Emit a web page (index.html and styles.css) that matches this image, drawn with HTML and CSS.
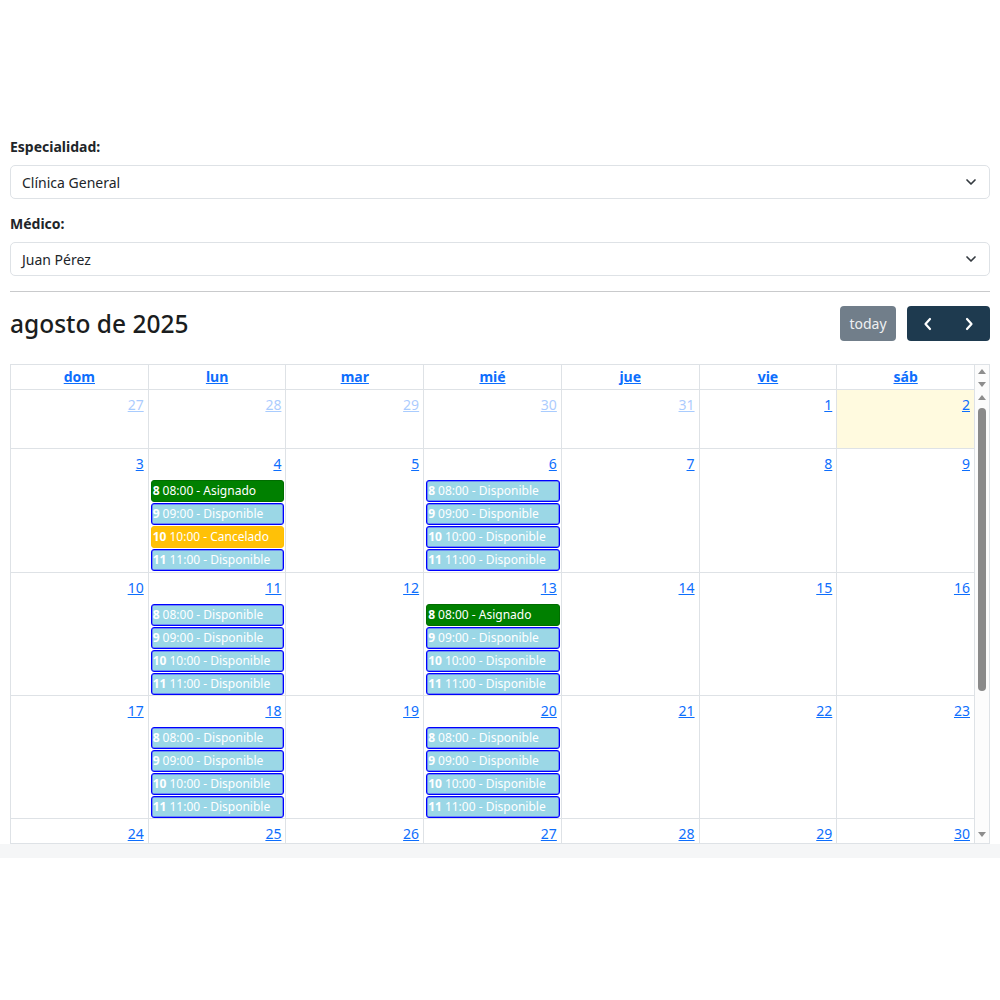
FILE: index.html
```html
<!DOCTYPE html>
<html lang="es">
<head>
<meta charset="utf-8">
<title>Agenda</title>
<link rel="stylesheet" href="styles.css">
</head>
<body>
<div class="container">
  <label class="form-label">Especialidad:</label>
  <div class="form-select"><span>Clínica General</span><svg class="chev" viewBox="0 0 14 10"><polyline points="3,3 7,7 11,3" fill="none" stroke="#343a40" stroke-width="1.7" stroke-linecap="round" stroke-linejoin="round"/></svg></div>
  <label class="form-label">Médico:</label>
  <div class="form-select"><span>Juan Pérez</span><svg class="chev" viewBox="0 0 14 10"><polyline points="3,3 7,7 11,3" fill="none" stroke="#343a40" stroke-width="1.7" stroke-linecap="round" stroke-linejoin="round"/></svg></div>
  <hr class="sep">
  <div class="toolbar">
    <h2 class="title">agosto de 2025</h2>
    <div class="tools">
      <button class="btn today">today</button>
      <div class="group">
        <button class="btn nav nav-prev"><svg viewBox="0 0 12 14" class="arr"><polyline points="8,2 3.5,7 8,12" fill="none" stroke="#fff" stroke-width="2.2" stroke-linecap="round" stroke-linejoin="round"/></svg></button>
        <button class="btn nav nav-next"><svg viewBox="0 0 12 14" class="arr"><polyline points="4,2 8.5,7 4,12" fill="none" stroke="#fff" stroke-width="2.2" stroke-linecap="round" stroke-linejoin="round"/></svg></button>
      </div>
    </div>
  </div>
  <div class="cal">
    <div class="cal-head">
      <div class="head-grid">
        <div class="th"><a>dom</a></div>
        <div class="th"><a>lun</a></div>
        <div class="th"><a>mar</a></div>
        <div class="th"><a>mié</a></div>
        <div class="th"><a>jue</a></div>
        <div class="th"><a>vie</a></div>
        <div class="th"><a>sáb</a></div>
      </div>
      <div class="sb sb-head"><span class="tri-up"></span><span class="tri-down"></span></div>
    </div>
    <div class="cal-body">
      <div class="body-clip">
        <div class="body-grid">
          <div class="day other"><a class="num">27</a></div>
          <div class="day other"><a class="num">28</a></div>
          <div class="day other"><a class="num">29</a></div>
          <div class="day other"><a class="num">30</a></div>
          <div class="day other"><a class="num">31</a></div>
          <div class="day"><a class="num">1</a></div>
          <div class="day is-today"><a class="num">2</a></div>

          <div class="day"><a class="num">3</a></div>
          <div class="day"><a class="num">4</a>
            <div class="events">
              <div class="ev ev-green"><b>8</b>08:00 - Asignado</div>
              <div class="ev ev-blue"><b>9</b>09:00 - Disponible</div>
              <div class="ev ev-yellow"><b>10</b>10:00 - Cancelado</div>
              <div class="ev ev-blue"><b>11</b>11:00 - Disponible</div>
            </div>
          </div>
          <div class="day"><a class="num">5</a></div>
          <div class="day"><a class="num">6</a>
            <div class="events">
              <div class="ev ev-blue"><b>8</b>08:00 - Disponible</div>
              <div class="ev ev-blue"><b>9</b>09:00 - Disponible</div>
              <div class="ev ev-blue"><b>10</b>10:00 - Disponible</div>
              <div class="ev ev-blue"><b>11</b>11:00 - Disponible</div>
            </div>
          </div>
          <div class="day"><a class="num">7</a></div>
          <div class="day"><a class="num">8</a></div>
          <div class="day"><a class="num">9</a></div>

          <div class="day"><a class="num">10</a></div>
          <div class="day"><a class="num">11</a>
            <div class="events">
              <div class="ev ev-blue"><b>8</b>08:00 - Disponible</div>
              <div class="ev ev-blue"><b>9</b>09:00 - Disponible</div>
              <div class="ev ev-blue"><b>10</b>10:00 - Disponible</div>
              <div class="ev ev-blue"><b>11</b>11:00 - Disponible</div>
            </div>
          </div>
          <div class="day"><a class="num">12</a></div>
          <div class="day"><a class="num">13</a>
            <div class="events">
              <div class="ev ev-green"><b>8</b>08:00 - Asignado</div>
              <div class="ev ev-blue"><b>9</b>09:00 - Disponible</div>
              <div class="ev ev-blue"><b>10</b>10:00 - Disponible</div>
              <div class="ev ev-blue"><b>11</b>11:00 - Disponible</div>
            </div>
          </div>
          <div class="day"><a class="num">14</a></div>
          <div class="day"><a class="num">15</a></div>
          <div class="day"><a class="num">16</a></div>

          <div class="day"><a class="num">17</a></div>
          <div class="day"><a class="num">18</a>
            <div class="events">
              <div class="ev ev-blue"><b>8</b>08:00 - Disponible</div>
              <div class="ev ev-blue"><b>9</b>09:00 - Disponible</div>
              <div class="ev ev-blue"><b>10</b>10:00 - Disponible</div>
              <div class="ev ev-blue"><b>11</b>11:00 - Disponible</div>
            </div>
          </div>
          <div class="day"><a class="num">19</a></div>
          <div class="day"><a class="num">20</a>
            <div class="events">
              <div class="ev ev-blue"><b>8</b>08:00 - Disponible</div>
              <div class="ev ev-blue"><b>9</b>09:00 - Disponible</div>
              <div class="ev ev-blue"><b>10</b>10:00 - Disponible</div>
              <div class="ev ev-blue"><b>11</b>11:00 - Disponible</div>
            </div>
          </div>
          <div class="day"><a class="num">21</a></div>
          <div class="day"><a class="num">22</a></div>
          <div class="day"><a class="num">23</a></div>

          <div class="day"><a class="num">24</a></div>
          <div class="day"><a class="num">25</a></div>
          <div class="day"><a class="num">26</a></div>
          <div class="day"><a class="num">27</a></div>
          <div class="day"><a class="num">28</a></div>
          <div class="day"><a class="num">29</a></div>
          <div class="day"><a class="num">30</a></div>
        </div>
      </div>
      <div class="sb sb-body">
        <span class="tri-up"></span>
        <span class="thumb"></span>
        <span class="sb-fill"></span>
        <span class="tri-down"></span>
      </div>
    </div>
  </div>
</div>
<div class="strip"></div>
</body>
</html>
```
FILE: styles.css
```css
* { box-sizing: border-box; }

body {
  margin: 0;
  font-family: "Noto Sans", "Open Sans", sans-serif;
  font-size: 14px;
  line-height: 1.5;
  color: #212529;
  background: #fff;
}

.container {
  padding: 136px 10px 0;
}

.form-label {
  display: block;
  font-weight: 700;
  margin-bottom: 8px;
  line-height: 21px;
}

.form-select {
  display: flex;
  align-items: center;
  justify-content: space-between;
  height: 34px;
  padding: 0 11px;
  border: 1px solid #dee2e6;
  border-radius: 5px;
  margin-bottom: 14px;
}

.chev {
  width: 14px;
  height: 10px;
}

.sep {
  margin: 15px 0 14px;
  border: 0;
  border-top: 1px solid #c9cacc;
  height: 0;
}

.toolbar {
  display: flex;
  align-items: center;
  justify-content: space-between;
  height: 35px;
  margin-bottom: 23px;
}

.title {
  margin: 0;
  font-size: 24.5px;
  font-weight: 500;
  line-height: 1.2;
  color: #1a1d20;
}

.tools {
  display: flex;
  align-items: center;
}

.btn {
  border: 0;
  height: 35px;
  font-family: inherit;
  font-size: 14px;
  color: #fff;
  padding: 0;
  display: flex;
  align-items: center;
  justify-content: center;
}

.today {
  width: 56px;
  background: #717e8a;
  color: #eef0f2;
  border-radius: 4px;
  margin-right: 11px;
}

.group {
  display: flex;
}

.nav {
  width: 41.5px;
  background: #1e3a4f;
}

.nav-prev { border-radius: 4px 0 0 4px; }
.nav-next { border-radius: 0 4px 4px 0; }

.arr {
  width: 12px;
  height: 14px;
}

.cal {
  border: 1px solid #dee2e6;
}

.cal-head {
  display: flex;
}

.head-grid {
  flex: 1;
  display: grid;
  grid-template-columns: repeat(7, 1fr);
}

.th {
  height: 25px;
  padding-top: 1px;
  text-align: center;
  border-right: 1px solid #dee2e6;
  border-bottom: 1px solid #dee2e6;
  font-weight: 700;
}

.th a {
  color: #0d6efd;
  text-decoration: underline;
}

.sb {
  width: 14px;
  flex: none;
  display: flex;
  flex-direction: column;
  align-items: center;
  background: #fcfcfc;
}

.sb-head {
  padding-top: 4px;
  gap: 8px;
}

.tri-up {
  width: 0;
  height: 0;
  border-left: 4px solid transparent;
  border-right: 4px solid transparent;
  border-bottom: 5px solid #8d8d8d;
}

.tri-down {
  width: 0;
  height: 0;
  border-left: 4px solid transparent;
  border-right: 4px solid transparent;
  border-top: 5px solid #8d8d8d;
}

.cal-body {
  display: flex;
  height: 453px;
}

.body-clip {
  flex: 1;
  overflow: hidden;
}

.body-grid {
  display: grid;
  grid-template-columns: repeat(7, 1fr);
  grid-template-rows: 59px 124px 123px 123px 124px;
}

.day {
  display: flex;
  flex-direction: column;
  min-width: 0;
  border-right: 1px solid #dee2e6;
  border-bottom: 1px solid #dee2e6;
}

.num {
  align-self: flex-end;
  height: 25px;
  padding: 4px 4px 0;
  line-height: 21px;
  color: #0d6efd;
  text-decoration: underline;
}

.other .num {
  opacity: 0.35;
}

.is-today {
  background: #fffadf;
}

.events {
  margin-top: 6px;
  display: flex;
  flex-direction: column;
  gap: 1px;
  padding: 0 1px 0 2px;
}

.ev {
  height: 22px;
  border: 1px solid;
  border-radius: 3px;
  padding: 0 1px;
  font-size: 12px;
  line-height: 20px;
  color: #fff;
  white-space: nowrap;
  overflow: hidden;
}

.ev b {
  font-weight: 700;
  margin-right: 3px;
}

.ev-green {
  background: #008000;
  border-color: #006d00;
}

.ev-blue {
  background: #9bd7e6;
  border-color: #0000ff;
  box-shadow: inset 0 0 0 0.5px #4040ff;
}

.ev-yellow {
  background: #ffc107;
  border-color: #ffbf00;
}

.sb-body {
  padding: 5px 0 6px;
}

.sb-body .thumb {
  width: 8px;
  height: 283px;
  margin-top: 8px;
  border-radius: 4px;
  background: #8a8a8a;
}

.sb-fill {
  flex: 1;
}

.strip {
  height: 14px;
  background: #f5f6f7;
}
```
